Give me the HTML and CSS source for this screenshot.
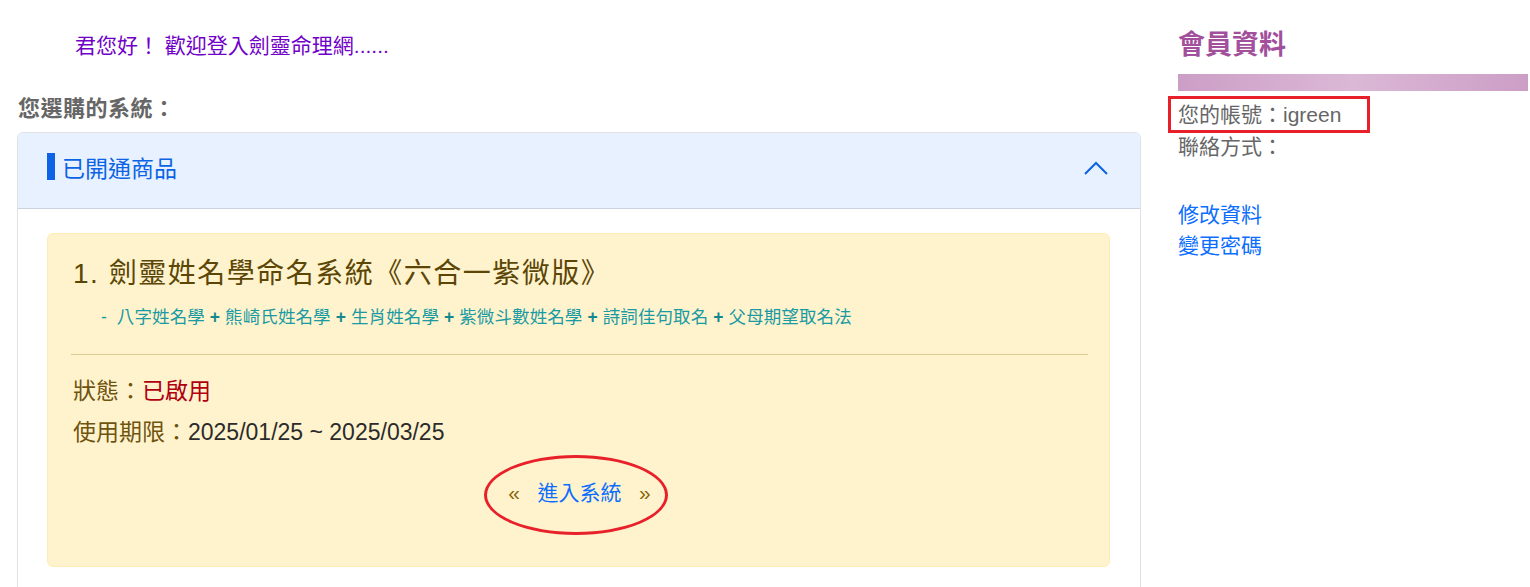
FILE: index.html
```html
<!DOCTYPE html>
<html lang="zh-Hant">
<head>
    <meta charset="UTF-8">
    <meta name="viewport" content="width=device-width, initial-scale=1.0">
    <title>劍靈命理網 - 會員專區</title>
    <link rel="stylesheet" href="styles.css">
</head>
<body>
    <div class="page">
        <div class="main">
            <p class="greeting">君您好！ 歡迎登入劍靈命理網......</p>
            <h3 class="section-title">您選購的系統：</h3>

            <div class="accordion">
                <div class="accordion-header">
                    <span class="accordion-title"><span class="bar"></span>已開通商品</span>
                    <svg class="chevron" width="24" height="14" viewBox="0 0 24 14">
                        <polyline points="1,13 12,2 23,13" fill="none" stroke="#0c63e4" stroke-width="2"/>
                    </svg>
                </div>
                <div class="accordion-body">
                    <div class="product">
                        <h4 class="product-name">1. 劍靈姓名學命名系統《六合一紫微版》</h4>
                        <p class="product-desc">- &nbsp;八字姓名學 <b>+</b> 熊崎氏姓名學 <b>+</b> 生肖姓名學 <b>+</b> 紫微斗數姓名學 <b>+</b> 詩詞佳句取名 <b>+</b> 父母期望取名法</p>
                        <hr>
                        <p class="info">狀態：<span class="active">已啟用</span></p>
                        <p class="info">使用期限：<span class="date">2025/01/25 ~ 2025/03/25</span></p>
                        <div class="enter">
                            <span class="enter-wrap">«&nbsp;&nbsp; <a href="#">進入系統</a> &nbsp;&nbsp;»
                                <span class="mark-ellipse"></span>
                            </span>
                        </div>
                    </div>
                </div>
            </div>
        </div>

        <div class="side">
            <h2 class="side-title">會員資料</h2>
            <div class="side-bar"></div>
            <p class="member-line first"><span class="mark-box">您的帳號：igreen</span></p>
            <p class="member-line">聯絡方式：</p>
            <p class="member-links">
                <a href="#">修改資料</a><br>
                <a href="#">變更密碼</a>
            </p>
        </div>
    </div>
</body>
</html>
```

FILE: styles.css
```css
body {
    margin: 0;
    font-family: "Liberation Sans", "Noto Sans CJK TC", sans-serif;
    color: #333;
    background: #fff;
}
a {
    color: #0d6efd;
    text-decoration: none;
}
.page {
    display: grid;
    grid-template-columns: 1124px 350px;
    gap: 37px;
    padding-left: 17px;
}

/* 左欄 */
.greeting {
    margin: 33px 0 0 58px;
    font-size: 21px;
    line-height: 26px;
    color: #7000c8;
}
.section-title {
    margin: 37px 0 0 1px;
    font-size: 22px;
    line-height: 26px;
    letter-spacing: 0.5px;
    color: #666;
}
.accordion {
    margin-top: 10px;
    border: 1px solid #dee2e6;
    border-radius: 6px;
    overflow: hidden;
}
.accordion-header {
    display: flex;
    justify-content: space-between;
    align-items: center;
    box-sizing: border-box;
    height: 76px;
    padding: 0 32px 8px 29px;
    background: #e7f1ff;
    border-bottom: 1px solid #c9d3e0;
}
.accordion-title {
    display: flex;
    align-items: center;
    font-size: 23px;
    color: #0c63e4;
}
.bar {
    display: inline-block;
    width: 8px;
    height: 27px;
    margin-right: 7px;
    background: #0d63e6;
}
.chevron {
    margin-top: 2px;
}
.accordion-body {
    padding: 24px 30px 30px 29px;
}
.product {
    background: #fff3cd;
    border: 1px solid #ffecb5;
    border-radius: 6px;
    padding: 22px 23px 58px 25px;
    color: #664d03;
}
.product-name {
    margin: 0;
    font-size: 28px;
    font-weight: normal;
    line-height: 36px;
    letter-spacing: 1.5px;
    color: #5c4606;
}
.product-desc {
    margin: 12px 0 0 28px;
    font-size: 17.5px;
    line-height: 26px;
    letter-spacing: 0.1px;
    color: #1a9aa2;
}
.product-desc b {
    color: #15888f;
}
hr {
    margin: 24px -2px 20px;
    border: 0;
    border-top: 1px solid #dccb95;
}
.info {
    margin: 0 0 9px;
    font-size: 23px;
    line-height: 32px;
    color: #6f5410;
}
.active {
    color: #b00010;
}
.date {
    color: #2b2b2b;
}
.enter {
    text-align: center;
    margin-top: 30px;
    font-size: 21px;
    line-height: 30px;
    color: #8a6508;
}
.enter-wrap {
    position: relative;
    display: inline-block;
}
.mark-ellipse {
    position: absolute;
    left: -24px;
    top: -23px;
    width: 184px;
    height: 80px;
    box-sizing: border-box;
    border: 3px solid #e8202a;
    border-radius: 50%;
}

/* 右欄 */
.side-title {
    margin: 27px 0 0;
    font-size: 27px;
    line-height: 36px;
    color: #a2509b;
}
.side-bar {
    height: 17px;
    margin-top: 11px;
    background: linear-gradient(100deg, #cc9ec6 0%, #dbb8d6 50%, #cc9ec6 100%);
}
.member-line {
    margin: 0;
    font-size: 21px;
    line-height: 31px;
    color: #666;
}
.member-line.first {
    margin-top: 9px;
}
.mark-box {
    display: inline-block;
    margin-left: -8px;
    padding: 0 27px 0 8px;
    outline: 3px solid #e8202a;
    outline-offset: -1px;
    line-height: 33px;
    margin-top: -2px;
    vertical-align: top;
}
.member-links {
    margin: 37px 0 0;
    font-size: 21px;
    line-height: 31px;
}
```
